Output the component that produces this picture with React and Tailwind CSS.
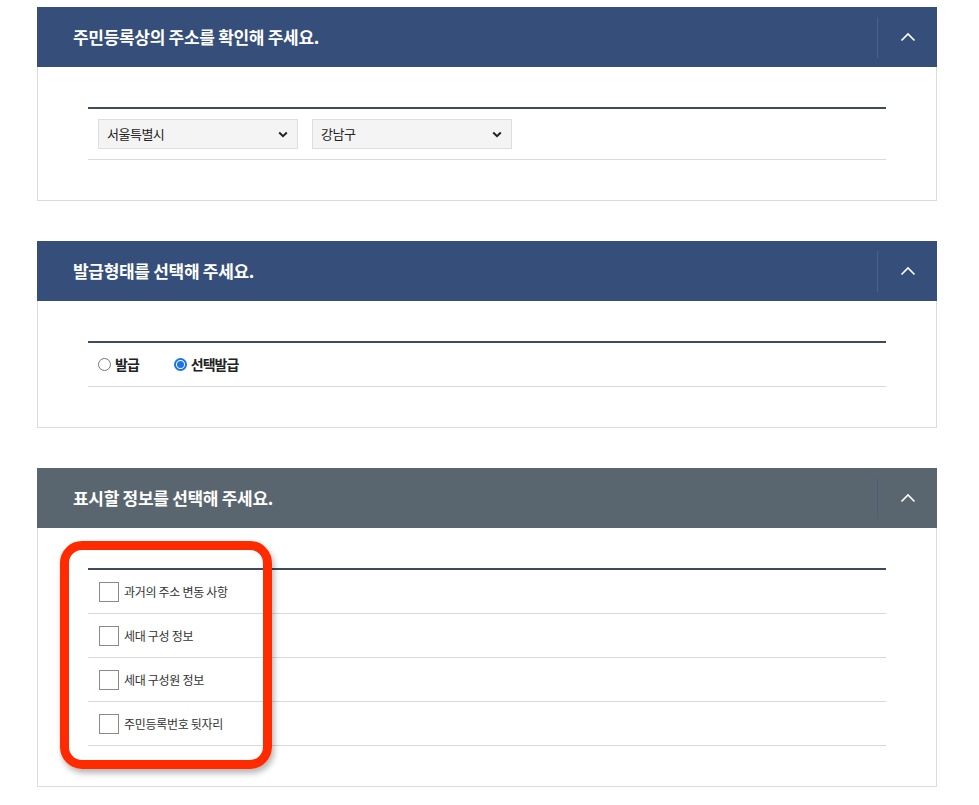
import React from "react";

const font = { fontFamily: '"Noto Sans CJK KR", "Noto Sans", sans-serif' };

function ChevronUp() {
  return (
    <svg width="16" height="10" viewBox="0 0 16 10" fill="none">
      <path d="M1.5 8.5 L8 2 L14.5 8.5" stroke="white" strokeWidth="1.6" />
    </svg>
  );
}

function ChevronDown() {
  return (
    <svg width="10" height="7" viewBox="0 0 10 7" fill="none">
      <path d="M1.2 1.5 L5 5.2 L8.8 1.5" stroke="#222" strokeWidth="2" />
    </svg>
  );
}

function Panel({ title, headerBg, dividerColor, children }) {
  return (
    <div className="w-[900px]">
      <div className={`h-[60px] flex items-center justify-between ${headerBg}`}>
        <h2 className="pl-[36px] text-white text-[17px] font-bold tracking-[-0.3px]">{title}</h2>
        <div className={`h-[41px] w-[60px] border-l flex items-center justify-center ${dividerColor}`}>
          <ChevronUp />
        </div>
      </div>
      <div className="border border-t-0 border-[#dcdcdc] px-[50px] pt-[40px] pb-[40px]">
        <div className="border-t-2 border-[#3d4a5f]">{children}</div>
      </div>
    </div>
  );
}

function SelectBox({ value }) {
  return (
    <div className="w-[200px] h-[30px] bg-[#f4f4f4] border border-[#dedede] flex items-center justify-between pl-[8px] pr-[9px] text-[13px] tracking-[-0.5px] text-[#222]">
      <span>{value}</span>
      <ChevronDown />
    </div>
  );
}

function Radio({ checked, label }) {
  return (
    <label className="flex items-center gap-[4px]">
      {checked ? (
        <span className="w-[13px] h-[13px] rounded-full border-2 border-[#1a73e8] flex items-center justify-center">
          <span className="w-[7px] h-[7px] rounded-full bg-[#1a73e8]" />
        </span>
      ) : (
        <span className="w-[13px] h-[13px] rounded-full border border-[#767676] bg-white" />
      )}
      <span className="text-[14px] font-bold tracking-[-1px] text-[#222]">{label}</span>
    </label>
  );
}

const infoItems = ["과거의 주소 변동 사항", "세대 구성 정보", "세대 구성원 정보", "주민등록번호 뒷자리"];

export default function App() {
  return (
    <div className="relative min-h-screen bg-white pl-[37px] pt-[7px]" style={font}>
      <div className="flex flex-col gap-[40px]">
        <Panel title="주민등록상의 주소를 확인해 주세요." headerBg="bg-[#354f7a]" dividerColor="border-[#4a6189]">
          <div className="flex gap-[14px] pl-[10px] py-[10px] border-b border-[#d9d9d9]">
            <SelectBox value="서울특별시" />
            <SelectBox value="강남구" />
          </div>
        </Panel>

        <Panel title="발급형태를 선택해 주세요." headerBg="bg-[#354f7a]" dividerColor="border-[#4a6189]">
          <div className="h-[44px] flex items-center gap-[35px] pl-[10px] border-b border-[#d9d9d9]">
            <Radio label="발급" />
            <Radio checked label="선택발급" />
          </div>
        </Panel>

        <Panel title="표시할 정보를 선택해 주세요." headerBg="bg-[#59666f]" dividerColor="border-[#4e5d74]">
          {infoItems.map((item) => (
            <div key={item} className="h-[44px] flex items-center gap-[5px] pl-[11px] border-b border-[#d9d9d9]">
              <span className="w-[20px] h-[20px] border border-[#8a8a8a] bg-white" />
              <span className="text-[12px] tracking-[-0.3px] text-[#333]">{item}</span>
            </div>
          ))}
        </Panel>
      </div>

      <div className="absolute left-[60px] top-[541px] w-[212px] h-[228px] border-[9px] border-[#ff2a00] rounded-[22px] shadow-[2px_4px_6px_rgba(0,0,0,0.3)]" />
    </div>
  );
}
